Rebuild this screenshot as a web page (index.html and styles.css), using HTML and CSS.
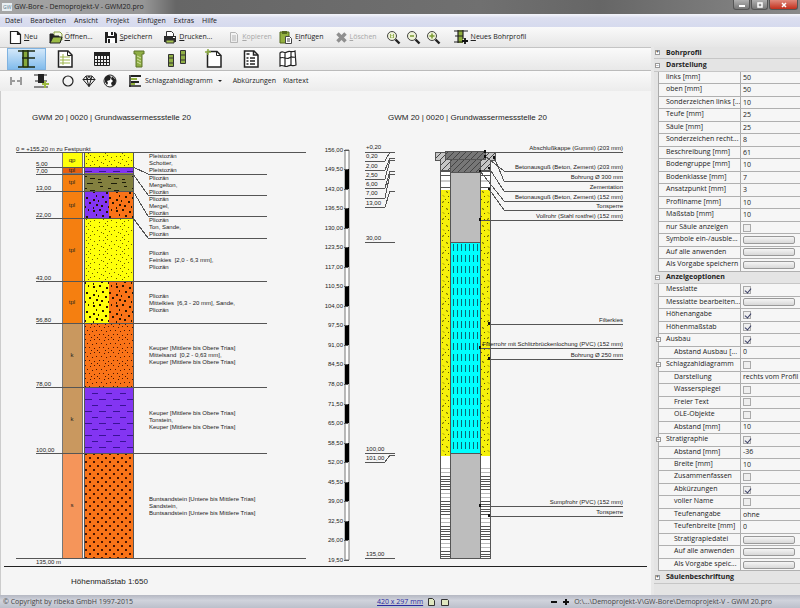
FILE: index.html
```html
<!DOCTYPE html>
<html lang="de">
<head>
    <meta charset="UTF-8">
    <meta name="viewport" content="width=device-width, initial-scale=1.0">
    <title>GW-Bore - Demoprojekt-V - GWM20.pro</title>
    <link rel="stylesheet" href="styles.css">
</head>
<body>
    <header class="titlebar">
        <span class="app-icon">GW</span>
        <h1>GW-Bore - Demoprojekt-V - GWM20.pro</h1>
        <div class="window-buttons">
            <button type="button" aria-label="Minimieren"><svg width="10" height="8" viewBox="0 0 10 8"><path d="M2 4h6v2H2z" fill="#fff"/></svg></button>
            <button type="button" aria-label="Maximieren"><svg width="10" height="8" viewBox="0 0 10 8"><path d="M3 2h4v4H3z" fill="none" stroke="#fff" stroke-width="1.500"/></svg></button>
            <button type="button" class="close" aria-label="Schließen"><svg width="10" height="8" viewBox="0 0 10 8"><path d="M3 2l4 4M7 2L3 6" stroke="#fff" stroke-width="1.500"/></svg></button>
        </div>
    </header>

    <nav class="menubar">
        <a href="#">Datei</a>
        <a href="#">Bearbeiten</a>
        <a href="#">Ansicht</a>
        <a href="#">Projekt</a>
        <a href="#">Einfügen</a>
        <a href="#">Extras</a>
        <a href="#">Hilfe</a>
    </nav>

    <div class="toolbar">
        <button type="button"><svg width="13" height="15" viewBox="0 0 13 15"><path d="M1.500 1.500h7l3 3v9h-10zM8.500 1.500v3h3" fill="#fff" stroke="#222" stroke-width="1.200"/></svg><span><u>N</u>eu</span></button>
        <button type="button"><svg width="14" height="15" viewBox="0 0 14 15"><path d="M5 2h6l2 2v6H5z" fill="#f5f8e4" stroke="#87a13c"/><path d="M1 13V4h3l1 2h5v2" fill="#222" stroke="#222"/><path d="M1 13l3-6h9l-2 6z" fill="#9bbb45" stroke="#222"/></svg><span><u>Ö</u>ffnen...</span></button>
        <button type="button"><svg width="14" height="15" viewBox="0 0 14 15"><path d="M1 2h10l2 2v9H1z" fill="#222"/><path d="M4 2h6v4H4zM3 8h8v5H3z" fill="#fff"/><path d="M7 2h2v3H7zM4 9h2v4H4z" fill="#222"/></svg><span><u>S</u>peichern</span></button>
        <button type="button"><svg width="14" height="15" viewBox="0 0 14 15"><path d="M3.500 6V1.500h5l2 2V6" fill="#fff" stroke="#333"/><path d="M1 6h12v6H1z" fill="#2b2b2b"/><path d="M3 10h8v3H3z" fill="#a7c552" stroke="#333"/><path d="M10 7h2v1h-2z" fill="#fff"/></svg><span><u>D</u>rucken...</span></button>
        <button type="button" class="wide" disabled><svg width="12" height="15" viewBox="0 0 12 15"><path d="M2.500 2.500h5l2 2v8h-7zM4 6h4M4 8h4M4 10h4" fill="none" stroke="#b5b5b5"/></svg><span><u>K</u>opieren</span></button>
        <button type="button" class="paste"><svg width="14" height="15" viewBox="0 0 14 15"><path d="M1 2h9v11H1z" fill="#93b03f" stroke="#55691f"/><path d="M3 1h5v3H3z" fill="#55691f"/><path d="M6.500 6.500h4l2 2v5h-6z" fill="#fff" stroke="#444"/><path d="M8 9h3M8 11h3" stroke="#444"/></svg><span>E<u>i</u>nfügen</span></button>
        <button type="button" disabled><svg width="13" height="15" viewBox="0 0 13 15"><path d="M2.500 3.500l8 8M10.500 3.500l-8 8" stroke="#8f8f8f" stroke-width="3.500"/></svg><span><u>L</u>öschen</span></button>
        <div class="zoom-group">
            <button type="button" aria-label="Zoom 1:1"><svg width="15" height="15" viewBox="0 0 15 15"><circle cx="6" cy="6" r="4.500" fill="#eef2d8" stroke="#444"/><path d="M4.500 4v4M7.500 4v4M6 5v1M6 7v1" stroke="#9ab35a"/><path d="M9.500 9.500l4 4" stroke="#222" stroke-width="2.400"/></svg></button>
            <button type="button" aria-label="Verkleinern"><svg width="15" height="15" viewBox="0 0 15 15"><circle cx="6" cy="6" r="4.500" fill="#eef2d8" stroke="#444"/><path d="M4 6h4" stroke="#7c9a33" stroke-width="1.500"/><path d="M9.500 9.500l4 4" stroke="#222" stroke-width="2.400"/></svg></button>
            <button type="button" aria-label="Vergrößern"><svg width="15" height="15" viewBox="0 0 15 15"><circle cx="6" cy="6" r="4.500" fill="#eef2d8" stroke="#444"/><path d="M3.500 6h5M6 3.500v5" stroke="#7c9a33" stroke-width="1.500"/><path d="M9.500 9.500l4 4" stroke="#222" stroke-width="2.400"/></svg></button>
        </div>
        <button type="button"><svg width="15" height="16" viewBox="0 0 15 16"><path d="M4 1h5v13H4z" fill="#8fad3c"/><path d="M0 2h14M1 7h8M0 13h9M4 1v13M9 1v9" stroke="#222" stroke-width="1.200"/><path d="M8 12h6M11 9v6" stroke="#111" stroke-width="1.800"/></svg><span><u>N</u>eues Bohrprofil</span></button>
    </div>

    <div class="workspace">
        <div class="main">
            <div class="view-tabs">
                <div class="tab-list">
                    <button type="button" class="active" aria-label="Bohrprofil"><svg width="20" height="20" viewBox="0 0 20 20"><path d="M6 1h5v18H6z" fill="#86a93a"/><path d="M1 2h17M5 9h13M1 18h17M6 1v17M11 1v17" stroke="#1d2a12" stroke-width="1.500"/></svg></button>
                    <button type="button" aria-label="Formular"><svg width="20" height="20" viewBox="0 0 20 20"><path d="M3.500 2h9.500l4 4v12H3.500z" fill="#fff" stroke="#222" stroke-width="1.500"/><path d="M12.500 2v4.500H17" fill="none" stroke="#222"/><path d="M5 8h10M5 11h10M5 14h10M8 5v11" stroke="#9db548"/></svg></button>
                    <button type="button" aria-label="Tabelle"><svg width="20" height="20" viewBox="0 0 20 20"><path d="M2 3h16v4H2z" fill="#222"/><path d="M2.500 3.500h15v13h-15zM2 10.500h16M2 13.500h16M5.500 6v10M8.500 6v10M11.500 6v10M14.500 6v10" fill="none" stroke="#222"/></svg></button>
                    <button type="button" aria-label="Ausbau"><svg width="20" height="20" viewBox="0 0 20 20"><path d="M5 2h10v3h-2v13H7V5H5z" fill="#8fae45" stroke="#5c7328"/><path d="M8 7l4 2M8 10l4 2M8 13l4 2" stroke="#d6e2a6"/></svg></button>
                    <button type="button" aria-label="Profilschnitt"><svg width="20" height="20" viewBox="0 0 20 20"><path d="M1.500 5.500h5v12h-5zM13.500 1.500h5v13h-5z" fill="#8fae45" stroke="#333"/><path d="M1 9h6M1 14h6M13 6h6M13 11h6" stroke="#333"/></svg></button>
                    <button type="button" aria-label="Neues Blatt"><svg width="20" height="20" viewBox="0 0 20 20"><path d="M3.500 2.500h9.500l4 4v11.500H3.500z" fill="#fff" stroke="#222" stroke-width="1.500"/><path d="M12.500 2v4.500H17" fill="none" stroke="#222"/><path d="M4 0v6M1 3h6" stroke="#8fae45" stroke-width="1.500"/></svg></button>
                    <button type="button" aria-label="Legende"><svg width="20" height="20" viewBox="0 0 20 20"><path d="M3.500 2h9.500l4 4v12H3.500z" fill="#fff" stroke="#222" stroke-width="1.500"/><path d="M5.500 5h3M5.500 9h2M9 9h5M5.500 12h2M9 12h5M5.500 15h2M9 15h5M12.500 2v4H17" fill="none" stroke="#222" stroke-width="1.500"/></svg></button>
                    <button type="button" aria-label="Karte"><svg width="20" height="20" viewBox="0 0 20 20"><path d="M2 4c3-3 4 1 7-1s4 1 8-1l1 14c-4 2-5-1-8 1s-5-2-8 0zM7 3v14M13 2v14M2 9c4-2 6 2 9 0s4 0 7-1" fill="#fff" stroke="#222" stroke-width="1.200"/></svg></button>
                </div>
            </div>

            <div class="subbar">
                <button type="button" aria-label="Abstand"><svg width="14" height="14" viewBox="0 0 14 14"><path d="M2 3v8M12 3v8M3 7h3M8 7h3" stroke="#444"/></svg></button>
                <button type="button" aria-label="Schicht einfügen"><svg width="16" height="16" viewBox="0 0 16 16"><path d="M4 1h6v9H4z" fill="#222"/><path d="M0 2h13M1 8h12M0 14h14" stroke="#222"/><path d="M8 11h7M11 8v7" stroke="#9dba42" stroke-width="2"/></svg></button>
                <button type="button" aria-label="Kreis"><svg width="14" height="14" viewBox="0 0 14 14"><circle cx="7" cy="7" r="5" fill="none" stroke="#222" stroke-width="1.200"/></svg></button>
                <button type="button" aria-label="Mineral"><svg width="14" height="14" viewBox="0 0 14 14"><path d="M4 2h6l3 3.500L7 12.500 1 5.500zM1 5.500h12M4 2l1 3.500 2 7 2-7L10 2M5 5.500L7 2l2 3.500" fill="none" stroke="#222"/></svg></button>
                <button type="button" aria-label="Geologie"><svg width="14" height="14" viewBox="0 0 14 14"><circle cx="7" cy="7" r="6" fill="#fff" stroke="#222"/><path d="M2 3l4-2 2 2-1 3-3 1 1 2-1 2-2-3zM9 2l4 4-1 5-3 1-1-3 2-2-2-2z" fill="#222"/></svg></button>
                <button type="button" class="chart-button"><svg width="15" height="14" viewBox="0 0 15 14"><path d="M2 1v12M1 12h12" stroke="#222" stroke-width="1.500"/><path d="M3 2h10M3 8h8" stroke="#222" stroke-width="2"/><path d="M3 5h6M3 10h4" stroke="#92b13d" stroke-width="2"/></svg><span>Schlagzahldiagramm</span><span class="caret"></span></button>
                <button type="button" class="text-button">Abkürzungen</button>
                <button type="button">Klartext</button>
            </div>

            <div class="sheet">
                <svg class="drawing" viewBox="0 91 651 504" preserveAspectRatio="xMinYMin meet" role="img" aria-label="Bohrprofil und Ausbauplan GWM 20">
                    <defs>
                        <pattern id="gravel" width="17" height="14" patternUnits="userSpaceOnUse">
                            <path d="M1 2.500h1M5 1.500h1M9 3.500h1M14 2.500h1M3 5.500h1M7 7.500h1M12 6.500h1M16 8.500h1M1 9.500h1M5 11.500h1M9 10.500h1M14 12.500h1M3 13.500h1" stroke="#6b5d00"/>
                        </pattern>
                        <pattern id="coarse" width="23" height="19" patternUnits="userSpaceOnUse">
                            <path d="M1 2h2M7 1h2M14 3h2M19 1h1M4 6h1M10 7h2M17 8h2M1 10h2M6 11h1M13 12h2M20 13h2M4 15h2M9 16h2M16 17h1M1 18h1" stroke="#2b1600" stroke-width="2"/>
                        </pattern>
                        <pattern id="sand" width="14" height="13" patternUnits="userSpaceOnUse">
                            <path d="M1 1.500h1M6 2.500h1M10 1.500h1M3 5.500h1M8 6.500h1M12 5.500h1M1 9.500h1M5 9.500h1M10 10.500h1M7 12.500h1M13 12.500h1" stroke="#4a1500"/>
                        </pattern>
                        <pattern id="sandstone" width="8" height="8" patternUnits="userSpaceOnUse">
                            <path d="M1 2h2M5 6h2" stroke="#4a1500" stroke-width="2"/>
                        </pattern>
                        <pattern id="clay" width="14" height="12" patternUnits="userSpaceOnUse">
                            <path d="M1 3.500h7M8 9.500h6" stroke="#3a1296"/>
                        </pattern>
                        <pattern id="marl" width="24" height="12" patternUnits="userSpaceOnUse">
                            <path d="M2 2.500h4M4 6.500h3M15 3.500h6M12 8.500h3M18 10.500h5M2 11.500h3" stroke="#1c1c08"/>
                        </pattern>
                        <pattern id="slots" width="4" height="11" patternUnits="userSpaceOnUse">
                            <path d="M1.500 2v7" stroke="#0a6a78"/>
                        </pattern>
                        <pattern id="filter" width="9" height="17" patternUnits="userSpaceOnUse">
                            <path d="M1 2.500h1M5 4.500l2 1M2 8.500l1 1M7 9.500h1M4 12.500h1M1 15.500l2-1M7 15.500h1" stroke="#5c5200"/>
                        </pattern>
                        <pattern id="seal" width="10" height="25" patternUnits="userSpaceOnUse">
                            <path d="M0 1.500h10M0 4.500h10M0 6.500h10M0 9.500h10M0 11.500h10M0 14.500h10" stroke="#555"/>
                            <path d="M0 18.500h10M0 22.500h10" stroke="#bbb"/>
                        </pattern>
                        <pattern id="concrete" width="6" height="6" patternUnits="userSpaceOnUse">
                            <path d="M-1 7L7-1" stroke="#444"/>
                        </pattern>
                    </defs>

                    <g class="heading">
                        <text x="32" y="120">GWM 20 | 0020 | Grundwassermessstelle 20</text>
                        <text x="388" y="120">GWM 20 | 0020 | Grundwassermessstelle 20</text>
                        <text x="71" y="584">Höhenmaßstab 1:650</text>
                    </g>

                    <!-- Stratigraphie -->
                    <g class="box">
                        <path d="M62 152h20v15H62z" fill="#ffff0a"/>
                        <path d="M62 167h20v6H62z" fill="#e85f10"/>
                        <path d="M62 173h20v18H62zM62 191h20v27H62zM62 218h20v63H62zM62 281h20v42H62z" fill="#f57f10"/>
                        <path d="M62 323h20v64H62zM62 387h20v66H62z" fill="#c9985f"/>
                        <path d="M62 453h20v105H62z" fill="#f5955a"/>
                    </g>
                    <g class="code">
                        <text x="72" y="162">qp</text>
                        <text x="72" y="172">tpl</text>
                        <text x="72" y="184">tpl</text>
                        <text x="72" y="207">tpl</text>
                        <text x="72" y="252">tpl</text>
                        <text x="72" y="304">tpl</text>
                        <text x="72" y="357">k</text>
                        <text x="72" y="421">k</text>
                        <text x="72" y="507">s</text>
                    </g>

                    <!-- Säule -->
                    <g>
                        <path d="M84 152h49v15H84zM84 218h49v63H84zM84 281h25v42H84z" fill="#ffff0a"/>
                        <path d="M84 167h49v6H84zM84 191h25v27H84zM84 387h49v66H84z" fill="#8335f2"/>
                        <path d="M84 173h49v18H84z" fill="#83803f"/>
                        <path d="M109 191h24v27h-24zM109 281h24v42h-24zM84 323h49v64H84zM84 453h49v105H84z" fill="#f97318"/>
                        <path d="M84 152h49v15H84zM84 218h49v63H84z" fill="url(#gravel)"/>
                        <path d="M84 173h49v18H84z" fill="url(#marl)"/>
                        <path d="M84 191h49v27H84zM84 281h49v42H84z" fill="url(#coarse)"/>
                        <path d="M84 323h49v64H84z" fill="url(#sand)"/>
                        <path d="M84 387h49v66H84zM84 167h49v6H84z" fill="url(#clay)"/>
                        <path d="M84 453h49v105H84z" fill="url(#sandstone)"/>
                        <path class="line" d="M84 152h49v406H84z"/>
                    </g>
                    <path class="line" d="M16 152h290M36 167h97l15 7h119M36 174h97l15 21h119M36 191h97l15 25h119M36 218h97l15 20h119M36 281h231M36 323h231M36 387h231M36 453h231M16 558h290"/>
                    <path class="frame" d="M4 566h643"/>

                    <g class="label">
                        <text x="16" y="151">0 = +155,20 m zu Festpunkt</text>
                        <text x="36" y="166">5,00</text>
                        <text x="36" y="173">7,00</text>
                        <text x="36" y="190">13,00</text>
                        <text x="36" y="217">22,00</text>
                        <text x="36" y="280">43,00</text>
                        <text x="36" y="322">56,80</text>
                        <text x="36" y="386">78,00</text>
                        <text x="36" y="452">100,00</text>
                        <text x="36" y="564">135,00 m</text>

                        <text x="149" y="158">Pleistozän</text>
                        <text x="149" y="165">Schotter,</text>
                        <text x="149" y="172">Pleistozän</text>
                        <text x="149" y="180">Pliozän</text>
                        <text x="149" y="187">Mergelton,</text>
                        <text x="149" y="194">Pliozän</text>
                        <text x="149" y="201">Pliozän</text>
                        <text x="149" y="208">Mergel,</text>
                        <text x="149" y="215">Pliozän</text>
                        <text x="149" y="222">Pliozän</text>
                        <text x="149" y="229">Ton, Sande,</text>
                        <text x="149" y="236">Pliozän</text>
                        <text x="149" y="255">Pliozän</text>
                        <text x="149" y="262">Feinkies&nbsp; [2,0 - 6,3 mm],</text>
                        <text x="149" y="269">Pliozän</text>
                        <text x="149" y="298">Pliozän</text>
                        <text x="149" y="305">Mittelkies&nbsp; [6,3 - 20 mm], Sande,</text>
                        <text x="149" y="312">Pliozän</text>
                        <text x="149" y="350">Keuper [Mittlere bis Obere Trias]</text>
                        <text x="149" y="357">Mittelsand&nbsp; [0,2 - 0,63 mm],</text>
                        <text x="149" y="364">Keuper [Mittlere bis Obere Trias]</text>
                        <text x="149" y="415">Keuper [Mittlere bis Obere Trias]</text>
                        <text x="149" y="422">Tonstein,</text>
                        <text x="149" y="429">Keuper [Mittlere bis Obere Trias]</text>
                        <text x="149" y="501">Buntsandstein [Untere bis Mittlere Trias]</text>
                        <text x="149" y="508">Sandstein,</text>
                        <text x="149" y="515">Buntsandstein [Untere bis Mittlere Trias]</text>
                    </g>

                    <!-- Messlatte -->
                    <path d="M345 150h4v410h-4z" fill="#fff" stroke="#777"/>
                    <path d="M347 169v20M347 208v20M347 247v20M347 286v20M347 325v20M347 364v20M347 404v19M347 443v19M347 482v19M347 521v19" stroke="#000" stroke-width="4"/>
                    <path class="line" d="M344 150h5M344 169h4M344 189h4M344 208h4M344 228h4M344 247h4M344 267h4M344 286h4M344 306h4M344 325h4M344 345h4M344 364h4M344 384h4M344 404h4M344 423h4M344 443h4M344 462h4M344 482h4M344 501h4M344 521h4M344 540h4M344 560h5"/>
                    <g class="label end">
                        <text x="343" y="152">156,00</text>
                        <text x="343" y="171">149,50</text>
                        <text x="343" y="191">143,00</text>
                        <text x="343" y="210">136,50</text>
                        <text x="343" y="230">130,00</text>
                        <text x="343" y="249">123,50</text>
                        <text x="343" y="269">117,00</text>
                        <text x="343" y="288">110,50</text>
                        <text x="343" y="308">104,00</text>
                        <text x="343" y="327">97,50</text>
                        <text x="343" y="347">91,00</text>
                        <text x="343" y="366">84,50</text>
                        <text x="343" y="386">78,00</text>
                        <text x="343" y="406">71,50</text>
                        <text x="343" y="425">65,00</text>
                        <text x="343" y="445">58,50</text>
                        <text x="343" y="464">52,00</text>
                        <text x="343" y="484">45,50</text>
                        <text x="343" y="503">39,00</text>
                        <text x="343" y="523">32,50</text>
                        <text x="343" y="542">26,00</text>
                        <text x="343" y="562">19,50</text>
                    </g>

                    <g class="label">
                        <text x="366" y="149">+0,20</text>
                        <text x="366" y="158">0,20</text>
                        <text x="366" y="168">2,00</text>
                        <text x="366" y="177">2,50</text>
                        <text x="366" y="186">6,00</text>
                        <text x="366" y="195">7,00</text>
                        <text x="366" y="205">13,00</text>
                        <text x="366" y="240">30,00</text>
                        <text x="366" y="451">100,00</text>
                        <text x="366" y="460">101,00</text>
                        <text x="366" y="556">135,00</text>
                    </g>
                    <path class="line" d="M365 152h30M365 161h20l5-9h5M365 170h20l5-12h5M365 179h20l5-19h5M365 188h20l5-17h5M365 198h20l5-24h5M365 207h20l5-16h5M365 242h30M365 453h30M365 462h20l5-7h5M365 558h30"/>

                    <!-- Ausbau -->
                    <path d="M440 170h50v20h-50z" fill="#fff"/>
                    <path class="line" d="M440 171h50M440 175h50M440 187h50"/>
                    <path d="M440 181h50" stroke="#999"/>
                    <path d="M440 190h50v266h-50z" fill="#f6f00c"/>
                    <path d="M440 190h50v266h-50z" fill="url(#filter)"/>
                    <path d="M440 456h50v102h-50z" fill="#fff"/>
                    <path d="M440 465h50v93h-50z" fill="url(#seal)"/>
                    <path d="M435 152h60v8h-5v10h-50v-10h-5z" fill="#c6c6c6"/>
                    <path class="line" d="M435 152h60v8h-5v10h-50v-10h-5z" fill="url(#concrete)"/>
                    <path class="line" d="M440 170v388h50V170"/>
                    <path class="line solid-grey" d="M450 172h30v70h-30zM450 453h30v105h-30z"/>
                    <path d="M450 242h30v211h-30z" fill="#0ff"/>
                    <path class="line" d="M450 242h30v211h-30z" fill="url(#slots)"/>
                    <path d="M445 151h40v8h-5v13h-30v-13h-5z" fill="#777"/>
                    <path class="line" d="M445 151h40v8h-5v13h-30v-13h-5zM445 159h40" fill="url(#concrete)"/>

                    <path class="line" d="M485 152h138M485 156l19 15h119M494 157l10 24h119M489 168l15 23h119M480 171l24 30h119M489 189l15 21h119M480 220h143M489 324h134M480 348h143M489 359h134M480 506h143M489 516h134"/>
                    <path d="M484 150h2v3h-2zM484 155h2v3h-2zM493 156h2v3h-2zM488 167h2v2h-2zM479 170h2v2h-2zM488 188h2v2h-2zM479 218h2v3h-2zM488 322h2v3h-2zM479 346h2v3h-2zM488 357h2v3h-2zM479 504h2v3h-2zM488 514h2v3h-2z" fill="#111"/>
                    <g class="label end">
                        <text x="623" y="150">Abschlußkappe (Gummi) (203 mm)</text>
                        <text x="623" y="169">Betonausguß (Beton, Zement) (203 mm)</text>
                        <text x="623" y="179">Bohrung Ø 300 mm</text>
                        <text x="623" y="189">Zementation</text>
                        <text x="623" y="199">Betonausguß (Beton, Zement) (152 mm)</text>
                        <text x="623" y="208">Tonsperre</text>
                        <text x="623" y="218">Vollrohr (Stahl rostfrei) (152 mm)</text>
                        <text x="623" y="322">Filterkies</text>
                        <text x="623" y="346">Filterrohr mit Schlitzbrückenlochung (PVC) (152 mm)</text>
                        <text x="623" y="357">Bohrung Ø 250 mm</text>
                        <text x="623" y="504">Sumpfrohr (PVC) (152 mm)</text>
                        <text x="623" y="514">Tonsperre</text>
                    </g>
                </svg>
            </div>
        </div>

        <aside class="properties">
            <div class="group"><button type="button" class="toggle" aria-label="Bohrprofil aufklappen">+</button><h2>Bohrprofil</h2></div>
            <div class="group"><button type="button" class="toggle" aria-label="Darstellung zuklappen">−</button><h2>Darstellung</h2></div>
            <div class="row"><label for="links">links [mm]</label><input type="text" id="links" value="50"></div>
            <div class="row"><label for="oben">oben [mm]</label><input type="text" id="oben" value="50"></div>
            <div class="row"><label for="sz-links">Sonderzeichen links [...</label><input type="text" id="sz-links" value="10"></div>
            <div class="row"><label for="teufe">Teufe [mm]</label><input type="text" id="teufe" value="25"></div>
            <div class="row"><label for="saeule">Säule [mm]</label><input type="text" id="saeule" value="25"></div>
            <div class="row"><label for="sz-rechts">Sonderzeichen recht...</label><input type="text" id="sz-rechts" value="8"></div>
            <div class="row"><label for="beschreibung">Beschreibung [mm]</label><input type="text" id="beschreibung" value="61"></div>
            <div class="row"><label for="bodengruppe">Bodengruppe [mm]</label><input type="text" id="bodengruppe" value="10"></div>
            <div class="row"><label for="bodenklasse">Bodenklasse [mm]</label><input type="text" id="bodenklasse" value="7"></div>
            <div class="row"><label for="ansatzpunkt">Ansatzpunkt [mm]</label><input type="text" id="ansatzpunkt" value="3"></div>
            <div class="row"><label for="profilname">Profilname [mm]</label><input type="text" id="profilname" value="10"></div>
            <div class="row"><label for="massstab">Maßstab [mm]</label><input type="text" id="massstab" value="10"></div>
            <div class="row"><label for="nur-saeule">nur Säule anzeigen</label><input type="checkbox" id="nur-saeule"></div>
            <div class="row"><label for="symbole">Symbole ein-/ausble...</label><button type="button" id="symbole" class="action"></button></div>
            <div class="row"><label for="alle-1">Auf alle anwenden</label><button type="button" id="alle-1" class="action"></button></div>
            <div class="row"><label for="vorgabe-1">Als Vorgabe speichern</label><button type="button" id="vorgabe-1" class="action"></button></div>
            <div class="group"><button type="button" class="toggle" aria-label="Anzeigeoptionen zuklappen">−</button><h2>Anzeigeoptionen</h2></div>
            <div class="row"><label for="messlatte">Messlatte</label><input type="checkbox" id="messlatte" checked></div>
            <div class="row"><label for="messlatte-edit">Messlatte bearbeiten...</label><button type="button" id="messlatte-edit" class="action"></button></div>
            <div class="row"><label for="hoehenangabe">Höhenangabe</label><input type="checkbox" id="hoehenangabe" checked></div>
            <div class="row"><label for="hoehenmassstab">Höhenmaßstab</label><input type="checkbox" id="hoehenmassstab" checked></div>
            <div class="row parent"><button type="button" class="toggle" aria-label="Ausbau zuklappen">−</button><label for="ausbau">Ausbau</label><input type="checkbox" id="ausbau" checked></div>
            <div class="row child"><label for="abstand-ausbau">Abstand Ausbau [...</label><input type="text" id="abstand-ausbau" value="0"></div>
            <div class="row parent"><button type="button" class="toggle" aria-label="Schlagzahldiagramm zuklappen">−</button><label for="schlagzahl">Schlagzahldiagramm</label><input type="checkbox" id="schlagzahl"></div>
            <div class="row child"><label for="darstellung">Darstellung</label><select id="darstellung"><option>rechts vom Profil</option></select></div>
            <div class="row child"><label for="wasserspiegel">Wasserspiegel</label><input type="checkbox" id="wasserspiegel"></div>
            <div class="row child"><label for="freier-text">Freier Text</label><input type="checkbox" id="freier-text"></div>
            <div class="row child"><label for="ole">OLE-Objekte</label><input type="checkbox" id="ole"></div>
            <div class="row child"><label for="abstand-1">Abstand [mm]</label><input type="text" id="abstand-1" value="10"></div>
            <div class="row parent"><button type="button" class="toggle" aria-label="Stratigraphie zuklappen">−</button><label for="stratigraphie">Stratigraphie</label><input type="checkbox" id="stratigraphie" checked></div>
            <div class="row child"><label for="abstand-2">Abstand [mm]</label><input type="text" id="abstand-2" value="-36"></div>
            <div class="row child"><label for="breite">Breite [mm]</label><input type="text" id="breite" value="10"></div>
            <div class="row child"><label for="zusammenfassen">Zusammenfassen</label><input type="checkbox" id="zusammenfassen"></div>
            <div class="row child"><label for="abkuerzungen">Abkürzungen</label><input type="checkbox" id="abkuerzungen" checked></div>
            <div class="row child"><label for="voller-name">voller Name</label><input type="checkbox" id="voller-name"></div>
            <div class="row child"><label for="teufenangabe">Teufenangabe</label><select id="teufenangabe"><option>ohne</option></select></div>
            <div class="row child"><label for="teufenbreite">Teufenbreite [mm]</label><input type="text" id="teufenbreite" value="0"></div>
            <div class="row child"><label for="datei">Stratigrapiedatei</label><button type="button" id="datei" class="action"></button></div>
            <div class="row child"><label for="alle-2">Auf alle anwenden</label><button type="button" id="alle-2" class="action"></button></div>
            <div class="row child"><label for="vorgabe-2">Als Vorgabe speic...</label><button type="button" id="vorgabe-2" class="action"></button></div>
            <div class="group"><button type="button" class="toggle" aria-label="Säulenbeschriftung aufklappen">+</button><h2>Säulenbeschriftung</h2></div>
        </aside>
    </div>

    <footer class="statusbar">
        <span class="copyright">© Copyright by ribeka GmbH 1997-2015</span>
        <div class="page-size">
            <a href="#">420 x 297 mm</a>
            <svg width="9" height="10" viewBox="0 0 9 10"><path d="M1.500 1.500h4l2 2v5h-6z" fill="#dfe8c0" stroke="#333"/></svg>
            <svg width="10" height="10" viewBox="0 0 10 10"><path d="M1.500 2.500h6l1 1v5h-7z" fill="#dfe8c0" stroke="#333"/></svg>
        </div>
        <div class="file">
            <button type="button" aria-label="Kleiner"><svg width="8" height="8" viewBox="0 0 8 8"><path d="M1 4h6" stroke="#111" stroke-width="2"/></svg></button>
            <button type="button" aria-label="Größer"><svg width="8" height="8" viewBox="0 0 8 8"><path d="M1 4h6M4 1v6" stroke="#111" stroke-width="2"/></svg></button>
            <span>O:\...\Demoprojekt-V\GW-Bore\Demoprojekt-V - GWM 20.pro</span>
        </div>
    </footer>
</body>
</html>
```
FILE: styles.css
```css
* {
    box-sizing: border-box;
}

body {
    margin: 0;
    display: flex;
    flex-direction: column;
    min-height: 100vh;
    background-color: #f0f0f0;
    color: #222;
    font-family: "Open Sans", "Noto Sans", sans-serif;
    font-size: 7px;
    line-height: 10px;
}

button,
input,
select {
    margin: 0;
    padding: 0;
    border: none;
    background: none;
    color: inherit;
    font: inherit;
}

button {
    display: flex;
    align-items: center;
    gap: 2px;
    white-space: nowrap;
}

button:disabled {
    color: #a8a8a8;
}

svg {
    display: block;
    flex-shrink: 0;
}

/* Titelleiste */
.titlebar {
    display: flex;
    align-items: center;
    height: 14px;
    padding: 0 2px;
    gap: 2px;
    background: linear-gradient(90deg, #a6a6a6 0, #969696 18%, #666 22%, #707070 60%, #666 75%, #8a8a8a 100%);
}

.titlebar h1 {
    flex: 1;
    margin: 0;
    font-size: 7px;
    font-weight: normal;
}

.app-icon {
    padding: 0 1px;
    background-color: #e8eef2;
    color: #5a7a8a;
    font-size: 5px;
    line-height: 8px;
}

.window-buttons {
    display: flex;
    align-self: flex-start;
    gap: 1px;
}

.window-buttons button {
    justify-content: center;
    width: 17px;
    height: 10px;
    background: linear-gradient(#b0b0b0, #777);
    border: 1px solid #555;
    border-top: none;
    border-radius: 0 0 3px 3px;
}

.window-buttons .close {
    width: 29px;
    background: linear-gradient(#e08a7c, #c22f1c);
}

/* Menü */
.menubar {
    display: flex;
    align-items: center;
    gap: 8px;
    height: 13px;
    padding: 0 5px;
    background: linear-gradient(#f4f5fb 0, #dcdff0 30%, #d6daee 100%);
}

.menubar a {
    color: #222;
    text-decoration: none;
}

/* Werkzeugleisten */
.toolbar {
    display: flex;
    align-items: center;
    gap: 11px;
    height: 20px;
    padding: 0 9px;
    background: linear-gradient(#fafafa, #e6e6e6);
}

.toolbar .wide {
    margin-left: 5px;
}

.toolbar .paste {
    margin-left: -4px;
}

.zoom-group {
    display: flex;
    gap: 5px;
    margin: 0 2px 0 -2px;
}

.workspace {
    display: flex;
    flex: 1;
}

.main {
    display: flex;
    flex: 1;
    flex-direction: column;
    min-width: 0;
}

.view-tabs {
    height: 24px;
    padding: 0 7px;
    border-top: 1px solid #c4c4c4;
    border-bottom: 1px solid #bbb;
    background: linear-gradient(#fafafa, #e8e8e8);
}

.tab-list {
    display: flex;
    width: 300px;
    height: 100%;
}

.tab-list button {
    flex: 1;
    justify-content: center;
}

.tab-list .active {
    border: 1px solid #7fb2e0;
    background: linear-gradient(#d3e8fa, #82bcec);
}

.subbar {
    display: flex;
    align-items: center;
    gap: 7px;
    height: 20px;
    padding: 0 9px;
    background: linear-gradient(#fafafa, #ececec);
}

.subbar button:first-child {
    margin-right: 4px;
}

.subbar button:nth-child(2) {
    margin-right: 4px;
}

.chart-button {
    margin-left: 4px;
}

.caret {
    margin-left: 3px;
    border: 2px solid transparent;
    border-top-color: #222;
    border-bottom: none;
}

.text-button {
    margin-left: 4px;
}

/* Zeichnung */
.sheet {
    flex: 1;
    background-color: #f5f5f5;
    box-shadow: inset 1px 0 #ccc;
}

.drawing {
    width: 100%;
    height: auto;
    font-family: "Liberation Sans", Arial, sans-serif;
}

.drawing text {
    fill: #222;
}

.heading {
    font-size: 8px;
}

.label,
.code {
    font-size: 6px;
}

.code {
    text-anchor: middle;
}

.end {
    text-anchor: end;
}

.line {
    fill: none;
    stroke: #555;
    stroke-width: 1px;
    shape-rendering: crispEdges;
}

.line[fill] {
    fill: revert-layer;
}

.solid-grey {
    fill: #bdbdbd;
}

.box path {
    stroke: #777;
    stroke-width: 1px;
    shape-rendering: crispEdges;
}

.frame {
    stroke: #222;
    stroke-width: 1px;
    shape-rendering: crispEdges;
}

/* Eigenschaften */
.properties {
    display: flex;
    flex-direction: column;
    width: 149px;
    padding-bottom: 11px;
    border-left: 3px solid #e8e8e8;
    background-color: #e4e4e4;
}

.group,
.row {
    position: relative;
    display: flex;
    flex: 1;
    align-items: center;
    min-height: 12px;
}

.group {
    gap: 6px;
    padding-left: 1px;
    border-bottom: 1px solid #c6c6c6;
}

.group h2 {
    margin: 0;
    font-size: 7px;
    font-weight: bold;
}

.toggle {
    justify-content: center;
    width: 5px;
    height: 5px;
    border: 1px solid #999;
    background-color: #fff;
    font-size: 5px;
    line-height: 3px;
}

.row {
    margin-left: 4px;
    border-left: 1px solid #aaa;
    border-bottom: 1px solid #b0b0b0;
    background-color: #f6f6f6;
}

.row label {
    align-self: stretch;
    width: 82px;
    flex-shrink: 0;
    padding-left: 7px;
    border-right: 1px solid #aaa;
    overflow: hidden;
    white-space: nowrap;
}

.row .toggle {
    position: absolute;
    left: -3px;
}

.child label {
    padding-left: 15px;
}

.row input[type="text"],
.row select {
    flex: 1;
    width: 0;
    height: 10px;
    padding-left: 2px;
    appearance: none;
}

.row input[type="checkbox"] {
    width: 8px;
    height: 8px;
    margin-left: 2px;
    appearance: none;
    border: 1px solid #aaa;
    background-color: #eee;
}

.row input[type="checkbox"]:checked::before {
    content: "";
    display: block;
    width: 3px;
    height: 5px;
    margin-left: 2px;
    border: solid #3a3f66;
    border-width: 0 1px 1px 0;
    transform: rotate(40deg);
}

.action {
    flex: 1;
    height: 8px;
    margin: 0 5px 0 2px;
    border: 1px solid #999;
    border-radius: 2px;
    background: linear-gradient(#f5f5f5, #d8d8d8);
}

/* Statusleiste */
.statusbar {
    display: flex;
    align-items: center;
    justify-content: space-between;
    height: 13px;
    padding: 0 28px 0 3px;
    background: linear-gradient(#b4b7c2, #d0d3dc 40%, #bcc0cb);
    color: #444;
    font-size: 7px;
}

.page-size {
    margin-left: 144px;
}

.page-size,
.file {
    display: flex;
    align-items: center;
    gap: 4px;
}

.page-size a {
    color: #2a2aa0;
}
```
